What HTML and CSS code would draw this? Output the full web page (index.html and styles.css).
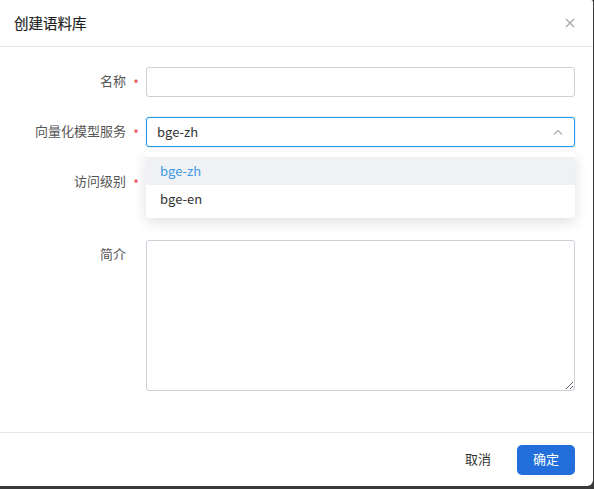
FILE: index.html
```html
<!DOCTYPE html>
<html lang="zh">
<head>
<meta charset="utf-8">
<title>创建语料库</title>
<link rel="stylesheet" href="styles.css">
</head>
<body>
<div class="modal">
  <div class="modal-header">
    <span class="modal-title">创建语料库</span>
    <span class="close">
      <svg width="10" height="10" viewBox="0 0 10 10"><path d="M1 1L9 9M9 1L1 9" stroke="#a4a7ad" stroke-width="1.3" fill="none"/></svg>
    </span>
  </div>
  <div class="modal-body">
    <div class="row">
      <div class="label">名称</div><div class="star">*</div>
      <div class="control"><input class="input" type="text"></div>
    </div>
    <div class="row">
      <div class="label">向量化模型服务</div><div class="star">*</div>
      <div class="control">
        <div class="select is-open">
          <span>bge-zh</span>
          <svg class="caret" width="10" height="6" viewBox="0 0 10 6"><path d="M1 5.5L5 1.5L9 5.5" stroke="#a8abb2" stroke-width="1.2" fill="none"/></svg>
        </div>
        <div class="dropdown">
          <div class="option selected">bge-zh</div>
          <div class="option">bge-en</div>
        </div>
      </div>
    </div>
    <div class="row row-level">
      <div class="label">访问级别</div><div class="star">*</div>
      <div class="control"><div class="select"></div></div>
    </div>
    <div class="row">
      <div class="label">简介</div><div class="star"></div>
      <div class="control"><textarea class="textarea"></textarea></div>
    </div>
  </div>
  <div class="modal-footer">
    <button class="btn btn-text">取消</button>
    <button class="btn btn-primary">确定</button>
  </div>
</div>
</body>
</html>
```
FILE: styles.css
```css
* { box-sizing: border-box; }
html, body { margin: 0; padding: 0; }
body {
  background: #3a3a3a;
  font-family: "Noto Sans CJK SC", "Noto Sans", sans-serif;
  width: 594px;
  height: 489px;
  overflow: hidden;
}
.modal {
  width: 593px;
  height: 486px;
  background: #fff;
  border-radius: 0 2px 6px 0;
  display: flex;
  flex-direction: column;
}
.modal-header {
  height: 47px;
  border-bottom: 1px solid #e5e6eb;
  display: flex;
  align-items: center;
  justify-content: space-between;
  padding: 0 18px 2px 14px;
}
.modal-title {
  font-size: 14.5px;
  font-weight: 400;
  color: #1f1f1f;
  -webkit-text-stroke: 0.2px #1f1f1f;
}
.close { display: flex; margin-top: 1px; }
.modal-body {
  flex: 1;
  padding: 20px 18px 0 0;
  display: flex;
  flex-direction: column;
  gap: 20px;
}
.row {
  display: flex;
  align-items: flex-start;
}
.label {
  width: 126px;
  text-align: right;
  font-size: 13px;
  color: #555;
  line-height: 27px;
}
.star {
  width: 20px;
  text-align: center;
  color: #e53935;
  font-size: 12px;
  line-height: 27px;
  padding-top: 3px;
}
.control {
  flex: 1;
  position: relative;
}
.input, .select {
  display: block;
  width: 100%;
  height: 30px;
  border: 1px solid #cdd0d8;
  border-radius: 3px;
  background: #fff;
  outline: none;
}
.select {
  display: flex;
  align-items: center;
  justify-content: space-between;
  padding: 0 11px 1px 10px;
  font-size: 13px;
  color: #333;
}
.select.is-open {
  border-color: #1e95ee;
  box-shadow: 0 0 2px rgba(30, 149, 238, 0.35);
}
.caret { margin-top: 0; }
.row-level { height: 53px; }
.dropdown {
  position: absolute;
  left: 0;
  right: 0;
  top: 35px;
  background: #fff;
  border-radius: 4px;
  padding: 5px 0;
  box-shadow: 0 4px 14px rgba(0, 0, 0, 0.13);
  z-index: 5;
}
.option {
  height: 28px;
  line-height: 27px;
  padding: 0 14px;
  font-size: 13px;
  color: #333;
}
.option.selected {
  background: #f0f1f5;
  color: #3d9be3;
}
.textarea {
  display: block;
  width: 100%;
  height: 151px;
  border: 1px solid #cdd0d8;
  border-radius: 3px;
  resize: vertical;
  outline: none;
}
.modal-footer {
  height: 54px;
  border-top: 1px solid #e5e6eb;
  display: flex;
  align-items: center;
  justify-content: flex-end;
  gap: 10px;
  padding: 0 18px 0 0;
}
.btn {
  height: 30px;
  min-width: 58px;
  border: none;
  border-radius: 5px;
  font-family: "Noto Sans CJK SC", "Noto Sans", sans-serif;
  font-size: 13px;
  padding: 0 14px 2px;
}
.btn-text {
  background: transparent;
  color: #333;
}
.btn-primary {
  background: #226fdc;
  color: #fff;
}
```
